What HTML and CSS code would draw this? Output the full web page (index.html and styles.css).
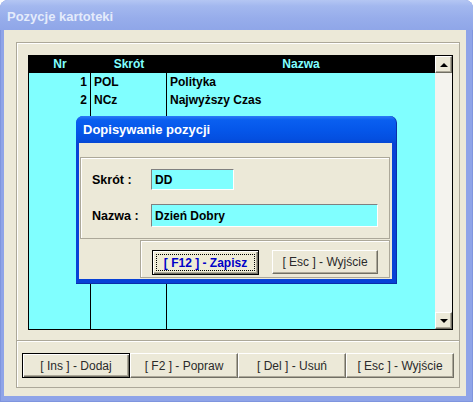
FILE: index.html
```html
<!DOCTYPE html>
<html>
<head>
<meta charset="utf-8">
<link rel="stylesheet" href="styles.css">
</head>
<body>
<div class="win">
  <div class="titlebar"><span class="title">Pozycje kartoteki</span></div>
  <div class="client">
    <div class="panel top">
      <div class="grid">
        <div class="gmain">
          <div class="ghead">
            <div class="h nr">Nr</div>
            <div class="h sk">Skrót</div>
            <div class="h nz">Nazwa</div>
          </div>
          <div class="gbody">
            <div class="col nr"><div class="cell num">1</div><div class="cell num">2</div></div>
            <div class="col sk"><div class="cell">POL</div><div class="cell">NCz</div></div>
            <div class="col nz"><div class="cell">Polityka</div><div class="cell">Najwyższy Czas</div></div>
          </div>
        </div>
        <div class="vscroll">
          <div class="sbtn"><span class="arrow up"></span></div>
          <div class="track"></div>
          <div class="sbtn"><span class="arrow down"></span></div>
        </div>
      </div>
    </div>
    <div class="panel bottom">
      <button class="btn def">[ Ins ] - Dodaj</button>
      <button class="btn">[ F2 ] - Popraw</button>
      <button class="btn">[ Del ] - Usuń</button>
      <button class="btn">[ Esc ] - Wyjście</button>
    </div>
  </div>
</div>

<div class="dialog">
  <div class="dtitle">Dopisywanie pozycji</div>
  <div class="dbody">
    <div class="dpanel fields">
      <div class="frow r1"><span class="lbl">Skrót :</span><div class="inp short">DD</div></div>
      <div class="frow r2"><span class="lbl">Nazwa :</span><div class="inp long">Dzień Dobry</div></div>
    </div>
    <div class="dpanel actions">
      <button class="btn save"><span class="focus">[ F12 ] - Zapisz</span></button>
      <button class="btn exit">[ Esc ] - Wyjście</button>
    </div>
  </div>
</div>
</body>
</html>
```

FILE: styles.css
```css
* { box-sizing: border-box; }
html, body { margin: 0; padding: 0; }
body {
  width: 473px;
  height: 402px;
  overflow: hidden;
  position: relative;
  font-family: "Liberation Sans", Arial, sans-serif;
  background: #fff;
}
.win {
  width: 473px;
  height: 402px;
  display: flex;
  flex-direction: column;
  background: #8fa4e8;
  border-radius: 8px 8px 0 0;
  border: 1px solid #7f95de;
  border-top: none;
}
.titlebar {
  height: 30px;
  flex: none;
  margin: 0 -1px;
  border-radius: 8px 8px 0 0;
  background: linear-gradient(#b4c6f3 0%, #a3b8ef 20%, #97adeb 60%, #8fa6e8 100%);
  display: flex;
  align-items: center;
  padding-left: 7px;
  padding-top: 3px;
}
.title {
  color: #e4ebfb;
  font-weight: bold;
  font-size: 13px;
}
.client {
  flex: 1;
  margin: 0 6px 5px 3px;
  background: #ece9d8;
  display: flex;
  flex-direction: column;
  padding: 12px 6px 8px 12px;
}
.panel {
  border: 1px solid #aca899;
  box-shadow: inset 1px 1px #fff;
}
.panel.top {
  height: 299px;
  padding: 12px 6px 0 11px;
}
.panel.bottom {
  height: 47px;
  border-top: none;
  padding: 12px 0 0 5px;
  display: flex;
  box-shadow: inset 1px 1px #fff, 0 -1px #aca899;
}
.grid {
  width: 425px;
  height: 275px;
  border: 1px solid #000;
  display: flex;
  background: #80ffff;
}
.gmain {
  flex: 1;
  display: flex;
  flex-direction: column;
}
.ghead {
  height: 17px;
  background: #000;
  display: flex;
  color: #80ffff;
  font-weight: bold;
  font-size: 12px;
}
.h {
  text-align: center;
  line-height: 17px;
}
.nr { width: 62px; }
.sk { width: 76px; }
.nz { flex: 1; }
.gbody {
  flex: 1;
  display: flex;
}
.col {
  border-right: 1px solid #000;
  font-weight: bold;
  font-size: 12px;
  color: #000;
}
.col.nz { border-right: none; }
.cell {
  height: 18px;
  line-height: 19px;
  padding-left: 3px;
  white-space: nowrap;
}
.cell.num {
  text-align: right;
  padding-right: 3px;
}
.vscroll {
  width: 17px;
  display: flex;
  flex-direction: column;
  background: #f4f3ee;
}
.sbtn {
  height: 17px;
  background: #ece9d8;
  border-top: 1px solid #fff;
  border-left: 1px solid #fff;
  border-right: 1px solid #716f64;
  border-bottom: 1px solid #716f64;
  box-shadow: inset -1px -1px #aca899;
  display: flex;
  align-items: center;
  justify-content: center;
}
.track { flex: 1; }
.arrow {
  width: 0;
  height: 0;
  border-left: 4px solid transparent;
  border-right: 4px solid transparent;
}
.arrow.up { border-bottom: 4px solid #000; }
.arrow.down { border-top: 4px solid #000; }
.btn {
  font-family: "Liberation Sans", Arial, sans-serif;
  font-size: 12px;
  color: #2a2a2a;
  background: #ece9d8;
  border-top: 1px solid #fff;
  border-left: 1px solid #fff;
  border-right: 1px solid #716f64;
  border-bottom: 1px solid #716f64;
  box-shadow: inset -1px -1px #aca899;
  padding: 0;
  margin: 0;
  width: 108px;
  height: 25px;
  text-align: center;
  white-space: nowrap;
}
.btn.def {
  border: 1px solid #000;
  box-shadow: inset 1px 1px #fff, inset -1px -1px #716f64, inset -2px -2px #aca899;
}
.dialog {
  position: absolute;
  left: 76px;
  top: 116px;
  width: 321px;
  height: 168px;
  background: #0842d6;
  border-radius: 7px 7px 0 0;
  display: flex;
  flex-direction: column;
  padding: 0 4px 4px 3px;
  border-right: 1px solid #0a2fa8;
  border-bottom: 1px solid #0a2fa8;
}
.dtitle {
  height: 27px;
  flex: none;
  margin: 0 -4px 0 -3px;
  border-radius: 7px 7px 0 0;
  background: linear-gradient(#2c7cf6 0%, #0a5ff0 15%, #0557ea 50%, #044fe0 85%, #0647d4 100%);
  color: #fff;
  font-weight: bold;
  font-size: 13px;
  padding-left: 7px;
  line-height: 28px;
}
.dbody {
  flex: 1;
  background: #ece9d8;
  display: flex;
  flex-direction: column;
  padding: 14px 2px 1px 1px;
}
.dpanel {
  border: 1px solid #aca899;
  box-shadow: inset 1px 1px #fff;
}
.fields {
  height: 82px;
  padding: 11px 0 0 11px;
}
.frow {
  display: flex;
  align-items: center;
}
.frow.r2 { margin-top: 14px; }
.lbl {
  width: 59px;
  font-weight: bold;
  font-size: 12.5px;
  color: #000;
}
.inp {
  background: #80ffff;
  border-top: 1px solid #808080;
  border-left: 1px solid #808080;
  border-right: 1px solid #fff;
  border-bottom: 1px solid #fff;
  font-weight: bold;
  font-size: 12px;
  color: #000;
  padding-left: 3px;
  display: flex;
  align-items: center;
}
.inp.short { width: 83px; height: 21px; }
.inp.long { width: 227px; height: 23px; }
.actions {
  margin-left: 60px;
  margin-top: 1px;
  flex: 1;
  display: flex;
  padding: 9px 0 0 11px;
  gap: 13px;
}
.btn.save {
  width: 107px;
  height: 25px;
  border: 1px solid #000;
  box-shadow: inset 1px 1px #fff, inset -1px -1px #716f64, inset -2px -2px #aca899;
  background: #efecd6;
  padding: 3px;
  display: flex;
}
.focus {
  flex: 1;
  border: 1px dotted #000;
  color: #0000c8;
  font-weight: bold;
  display: flex;
  align-items: center;
  justify-content: center;
}
.btn.exit {
  width: 106px;
  height: 24px;
}
```
